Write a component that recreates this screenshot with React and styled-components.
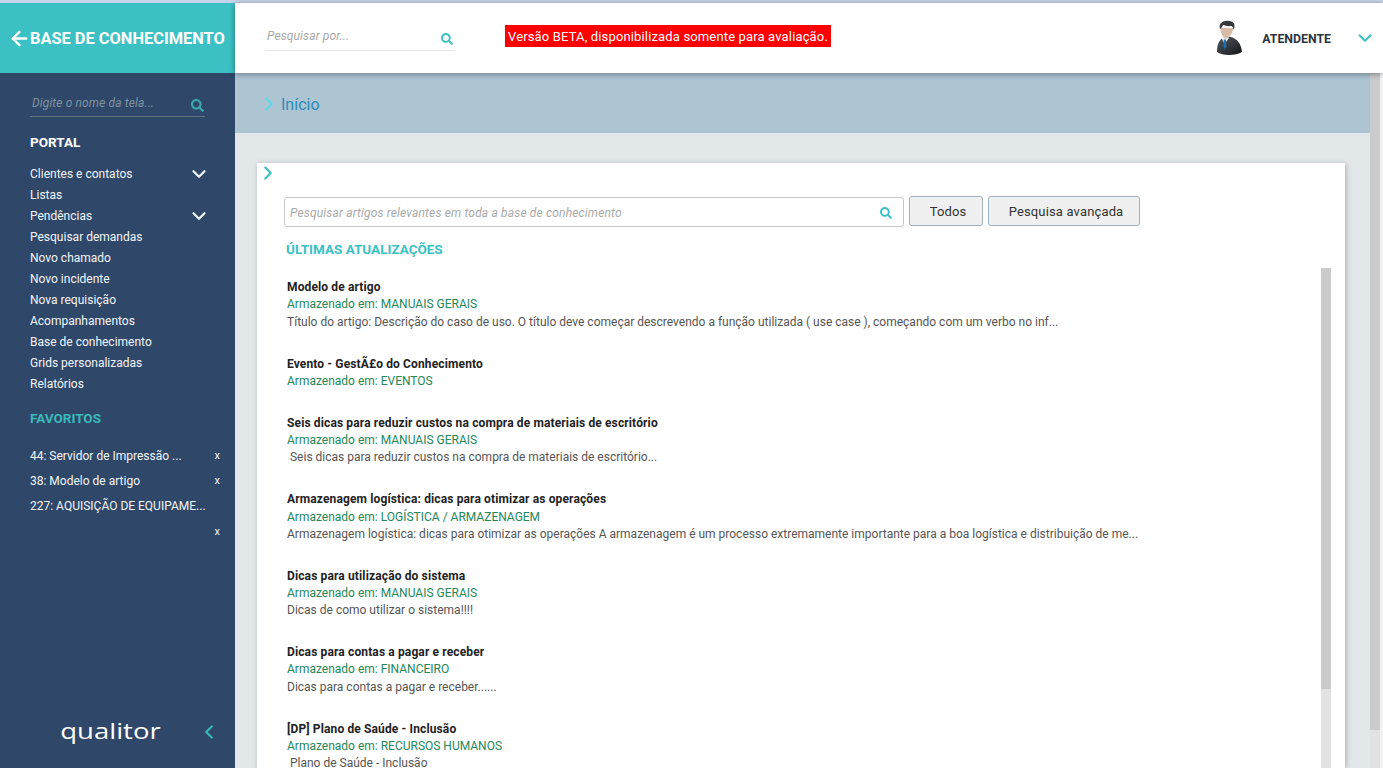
import React from 'react'
import styled, { createGlobalStyle } from 'styled-components'
import { ArrowLeft, ChevronDown, ChevronLeft, ChevronRight } from 'lucide-react'
import { FaSearch } from 'react-icons/fa'

const GlobalStyle = createGlobalStyle`
  html, body { margin: 0; padding: 0; height: 100%; overflow: hidden; }
  body { font-family: Roboto, "Liberation Sans", sans-serif; font-size: 12px; background: #fff; }
  * { box-sizing: border-box; }
`

const Page = styled.div`
  height: 768px;
  display: flex;
  flex-direction: column;
  overflow: hidden;
`
const TopStrip = styled.div`
  height: 3px;
  flex: none;
  background: #c6d6ea;
`
const Shell = styled.div`
  flex: 1;
  min-height: 0;
  display: flex;
`
const Sidebar = styled.aside`
  width: 235px;
  flex: none;
  display: flex;
  flex-direction: column;
  background: #2f4768;
  color: #fff;
`
const Brand = styled.div`
  height: 70px;
  flex: none;
  display: flex;
  align-items: center;
  padding: 1px 0 0 8px;
  background: #3bc1c4;
  font-size: 16.4px;
  font-weight: 700;
  white-space: nowrap;
  svg { margin-right: -1px; }
`
const SideBody = styled.div`
  flex: 1;
  display: flex;
  flex-direction: column;
  padding: 0 30px;
`
const UnderlineSearch = styled.div`
  display: flex;
  align-items: center;
  justify-content: space-between;
  font-style: italic;
  font-size: 12px;
  letter-spacing: 0.13px;
  border-bottom: 1px solid ${p => p.$line};
  color: ${p => p.$text};
  svg { color: ${p => p.$icon}; flex: none; }
`
const SideSearch = styled(UnderlineSearch)`
  margin-top: 21px;
  height: 23px;
  padding: 0 1px 4px 2px;
  svg { margin-top: 4px; }
`
const SectionTitle = styled.div`
  margin-top: ${p => p.$top}px;
  font-size: 13.5px;
  line-height: 16px;
  font-weight: 700;
  color: ${p => p.$color};
`
const NavList = styled.div`
  margin-top: 13px;
  display: flex;
  flex-direction: column;
`
const NavItem = styled.div`
  height: 21px;
  display: flex;
  align-items: center;
  justify-content: space-between;
  color: #f2f5f8;
  svg { margin-right: -5px; }
`
const FavList = styled.div`
  margin-top: 17px;
  display: flex;
  flex-direction: column;
`
const FavItem = styled.div`
  height: 25.3px;
  display: flex;
  align-items: center;
  justify-content: space-between;
  color: #f2f5f8;
  span:last-child { margin-right: -15px; font-size: 11px; }
`
const SideFoot = styled.div`
  margin-top: auto;
  height: 73px;
  display: flex;
  align-items: flex-start;
  justify-content: flex-end;
  gap: 37px;
  padding-top: 24px;
  margin-right: -15px;
  color: #3bb5b9;
`
const QualitorLogo = styled.div`
  font-family: "Open Sans", sans-serif;
  font-size: 21px;
  line-height: 24px;
  font-weight: 400;
  color: #fff;
  transform: scaleX(1.31);
  transform-origin: right center;
`
const Main = styled.div`
  flex: 1;
  min-width: 0;
  display: flex;
  flex-direction: column;
`
const Header = styled.header`
  height: 70px;
  flex: none;
  position: relative;
  z-index: 2;
  display: flex;
  align-items: center;
  padding: 0 7px 0 30px;
  background: #fff;
  box-shadow: 0 1px 6px rgba(0, 0, 0, 0.4);
`
const HeadSearch = styled(UnderlineSearch)`
  width: 190px;
  height: 28px;
  margin-top: -2px;
  padding: 0 2px 2px;
  svg { margin-top: 6px; }
`
const BetaNotice = styled.div`
  margin: -4px 0 0 50px;
  height: 22px;
  padding: 0 3px;
  display: flex;
  align-items: center;
  background: #fe0000;
  color: #fff;
  font-size: 13px;
  letter-spacing: 0.15px;
`
const UserArea = styled.div`
  margin-left: auto;
  display: flex;
  align-items: center;
`
const UserName = styled.span`
  margin: 1px 0 0 19px;
  font-size: 12.3px;
  font-weight: 700;
  color: #2c3440;
`
const UserChevron = styled(ChevronDown)`
  margin-left: 23px;
  color: #3bc1c4;
`
const Body = styled.div`
  flex: 1;
  min-height: 0;
  display: flex;
  background: #f2f3f4;
`
const Workspace = styled.div`
  flex: 1;
  min-width: 0;
  display: flex;
  flex-direction: column;
  background: #e2e7ea;
`
const Crumb = styled.div`
  height: 60px;
  flex: none;
  display: flex;
  align-items: center;
  gap: 1px;
  padding: 2px 0 0 23px;
  background: #adc4d2;
  font-size: 16px;
  color: #2d8cb8;
  svg { color: #5ed6e6; }
`
const Card = styled.section`
  flex: 1;
  min-height: 0;
  margin: 30px 25px 0 22px;
  padding: 0 14px 0 27px;
  display: flex;
  flex-direction: column;
  background: #fff;
  box-shadow: 1px 1px 5px rgba(0, 0, 0, 0.25);
`
const CardToggle = styled(ChevronRight)`
  flex: none;
  margin: -1px 0 0 -27px;
  color: #3bc1c4;
`
const SearchRow = styled.div`
  margin-top: 12px;
  display: flex;
  align-items: flex-start;
  gap: 5px;
`
const ArticleSearch = styled.div`
  width: 620px;
  height: 30px;
  margin-top: 1px;
  display: flex;
  align-items: center;
  justify-content: space-between;
  padding: 2px 11px 0 5px;
  border: 1px solid #c8c8c8;
  border-radius: 3px;
  font-style: italic;
  font-size: 12px;
  letter-spacing: 0.16px;
  color: #a9a9a9;
  svg { color: #3bc1c4; }
`
const Button = styled.div`
  width: ${p => p.$width}px;
  height: 30px;
  display: flex;
  align-items: center;
  justify-content: center;
  padding-left: 4px;
  border: 1px solid #9fb1bf;
  border-radius: 3px;
  background: #f0f0f0;
  color: #333;
  font-size: 13px;
  letter-spacing: 0.15px;
`
const UpdatesTitle = styled.h2`
  margin: 14px 0 0 2px;
  font-size: 13.5px;
  line-height: 16px;
  font-weight: 700;
  color: #3bc1c4;
`
const ListRow = styled.div`
  flex: 1;
  min-height: 0;
  margin-top: 11px;
  display: flex;
  justify-content: space-between;
`
const Articles = styled.div`
  padding: 11.3px 0 0 3px;
`
const Article = styled.article`
  margin-bottom: 25px;
  line-height: 17.14px;
  white-space: nowrap;
`
const ArticleTitle = styled.div`
  font-weight: 700;
  letter-spacing: 0.13px;
  color: #222;
`
const Stored = styled.div`
  color: #25875a;
`
const Summary = styled.div`
  color: #555;
`
const Scrollbar = styled.div`
  width: 10px;
  flex: none;
  display: flex;
  flex-direction: column;
  background: #e2e2e2;
`
const Thumb = styled.div`
  height: ${p => p.$height}px;
  background: #cbcbcb;
`
const PageScroll = styled(Scrollbar)`
  margin-right: 3px;
`

const portal = [
  ['Clientes e contatos', true],
  ['Listas'],
  ['Pendências', true],
  ['Pesquisar demandas'],
  ['Novo chamado'],
  ['Novo incidente'],
  ['Nova requisição'],
  ['Acompanhamentos'],
  ['Base de conhecimento'],
  ['Grids personalizadas'],
  ['Relatórios'],
]

const favorites = [
  ['44: Servidor de Impressão ...', 'x'],
  ['38: Modelo de artigo', 'x'],
  ['227: AQUISIÇÃO DE EQUIPAME...', ''],
  ['', 'x'],
]

const articles = [
  {
    title: 'Modelo de artigo',
    place: 'MANUAIS GERAIS',
    text: 'Título do artigo: Descrição do caso de uso. O título deve começar descrevendo a função utilizada ( use case ), começando com um verbo no inf...',
  },
  { title: 'Evento - GestÃ£o do Conhecimento', place: 'EVENTOS' },
  {
    title: 'Seis dicas para reduzir custos na compra de materiais de escritório',
    place: 'MANUAIS GERAIS',
    text: '\u00a0Seis dicas para reduzir custos na compra de materiais de escritório...',
  },
  {
    title: 'Armazenagem logística: dicas para otimizar as operações',
    place: 'LOGÍSTICA / ARMAZENAGEM',
    text: 'Armazenagem logística: dicas para otimizar as operações A armazenagem é um processo extremamente importante para a boa logística e distribuição de me...',
  },
  { title: 'Dicas para utilização do sistema', place: 'MANUAIS GERAIS', text: 'Dicas de como utilizar o sistema!!!!' },
  { title: 'Dicas para contas a pagar e receber', place: 'FINANCEIRO', text: 'Dicas para contas a pagar e receber......' },
  { title: '[DP] Plano de Saúde - Inclusão', place: 'RECURSOS HUMANOS', text: '\u00a0Plano de Saúde - Inclusão' },
]

function Avatar() {
  return (
    <svg width="27" height="36" viewBox="0 0 27 36">
      <defs>
        <linearGradient id="suit" x1="0" y1="0" x2="1" y2="1">
          <stop offset="0" stopColor="#565b61" />
          <stop offset="1" stopColor="#121417" />
        </linearGradient>
      </defs>
      <path d="M1 32C1 24 3 20 8 17l7 0c6 2 10 6 11 15-6 4-20 4-25 0z" fill="url(#suit)" />
      <path d="M5.500 18l3 6 4.500-6-2-2H6.500z" fill="#eef0f2" />
      <path d="M7.800 19.500h2l.5 7-1.500 3-1.500-3z" fill="#1470b8" />
      <path d="M4.500 8c0 6 3 10.500 5.500 10.500 3 0 7-5.500 7-10.500z" fill="#d8bca6" />
      <path d="M4 9C2 3 8 0 13 1c5 0 7 4 4.500 9-.5-3-1-4-2.500-4-3 .5-6-.5-8-1-1 1-1 3-3 4z" fill="#35383d" />
    </svg>
  )
}

function App() {
  return (
    <Page>
      <GlobalStyle />
      <TopStrip />
      <Shell>
        <Sidebar>
          <Brand>
            <ArrowLeft size={23} strokeWidth={2.5} />
            BASE DE CONHECIMENTO
          </Brand>
          <SideBody>
            <SideSearch $line="#62747f" $text="#7d93a3" $icon="#3ba9ac">
              Digite o nome da tela...
              <FaSearch size={13} />
            </SideSearch>
            <SectionTitle $top={17} $color="#fff">PORTAL</SectionTitle>
            <NavList>
              {portal.map(([label, open]) => (
                <NavItem key={label}>
                  {label}
                  {open && <ChevronDown size={22} strokeWidth={2.4} />}
                </NavItem>
              ))}
            </NavList>
            <SectionTitle $top={16} $color="#3bb9bc">FAVORITOS</SectionTitle>
            <FavList>
              {favorites.map(([label, close], i) => (
                <FavItem key={i}>
                  <span>{label}</span>
                  <span>{close}</span>
                </FavItem>
              ))}
            </FavList>
            <SideFoot>
              <QualitorLogo>qualitor</QualitorLogo>
              <ChevronLeft size={22} strokeWidth={2.4} style={{ marginTop: 2 }} />
            </SideFoot>
          </SideBody>
        </Sidebar>
        <Main>
          <Header>
            <HeadSearch $line="#e4e7e9" $text="#a8a8a8" $icon="#3bc1c4">
              Pesquisar por...
              <FaSearch size={12} />
            </HeadSearch>
            <BetaNotice>Versão BETA, disponibilizada somente para avaliação.</BetaNotice>
            <UserArea>
              <Avatar />
              <UserName>ATENDENTE</UserName>
              <UserChevron size={22} strokeWidth={2.2} />
            </UserArea>
          </Header>
          <Body>
            <Workspace>
              <Crumb>
                <ChevronRight size={22} strokeWidth={2.4} />
                Início
              </Crumb>
              <Card>
                <CardToggle size={22} strokeWidth={2.4} />
                <SearchRow>
                  <ArticleSearch>
                    Pesquisar artigos relevantes em toda a base de conhecimento
                    <FaSearch size={12} />
                  </ArticleSearch>
                  <Button $width={74}>Todos</Button>
                  <Button $width={152}>Pesquisa avançada</Button>
                </SearchRow>
                <UpdatesTitle>ÚLTIMAS ATUALIZAÇÕES</UpdatesTitle>
                <ListRow>
                  <Articles>
                    {articles.map(a => (
                      <Article key={a.title}>
                        <ArticleTitle>{a.title}</ArticleTitle>
                        <Stored>Armazenado em: {a.place}</Stored>
                        {a.text && <Summary>{a.text}</Summary>}
                      </Article>
                    ))}
                  </Articles>
                  <Scrollbar>
                    <Thumb $height={421} />
                  </Scrollbar>
                </ListRow>
              </Card>
            </Workspace>
            <PageScroll>
              <Thumb $height={657} />
            </PageScroll>
          </Body>
        </Main>
      </Shell>
    </Page>
  )
}

export default App
